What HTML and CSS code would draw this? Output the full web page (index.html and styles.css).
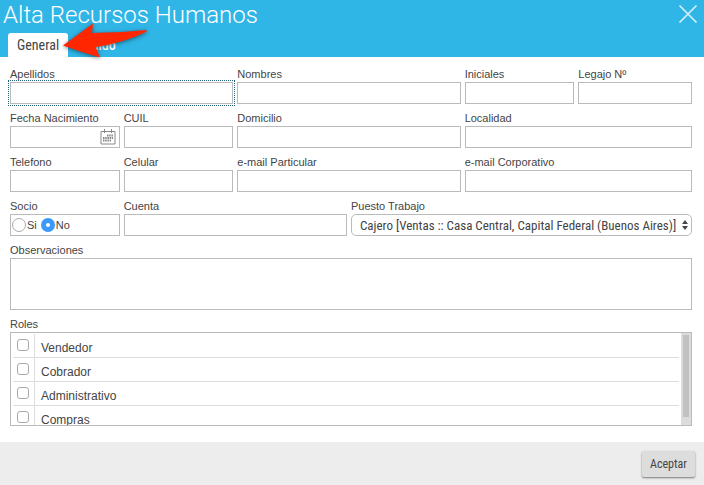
FILE: index.html
```html
<!DOCTYPE html>
<html lang="es">
<head>
    <meta charset="UTF-8">
    <meta name="viewport" content="width=device-width, initial-scale=1.0">
    <title>Alta Recursos Humanos</title>
    <link rel="stylesheet" href="styles.css">
</head>
<body>
    <form class="dialog">
        <header class="dialog-header">
            <div class="title-bar">
                <h1>Alta Recursos Humanos</h1>
                <button type="button" class="close-btn" aria-label="Cerrar">
                    <svg width="20" height="20" viewBox="0 0 20 20">
                        <path d="M1.5 1.5L18.5 18.5M18.5 1.5L1.5 18.5" fill="none" stroke="#d5f0fb" stroke-width="1.7"/>
                    </svg>
                </button>
            </div>
            <nav class="tabs">
                <button type="button" class="tab tab-active">General</button>
                <button type="button" class="tab">Pedido</button>
            </nav>
            <svg class="arrow" width="90" height="42" viewBox="0 0 90 42">
                <path d="M2 25.5L32 3.5L31 13Q58 13 85 10Q86.500 11 85 12Q62 23 34.500 27L39 37.500Q20 32 2 25.5Z" fill="#ff2600"/>
            </svg>
        </header>

        <main class="form-body">
            <div class="field span-2">
                <label for="apellidos">Apellidos</label>
                <input type="text" id="apellidos" class="field-current">
            </div>
            <div class="field span-2">
                <label for="nombres">Nombres</label>
                <input type="text" id="nombres">
            </div>
            <div class="field">
                <label for="iniciales">Iniciales</label>
                <input type="text" id="iniciales">
            </div>
            <div class="field">
                <label for="legajo">Legajo Nº</label>
                <input type="text" id="legajo">
            </div>

            <div class="field">
                <label for="fecha">Fecha Nacimiento</label>
                <div class="date-box">
                    <input type="text" id="fecha">
                    <button type="button" class="calendar-btn" aria-label="Calendario">
                        <svg width="16" height="16" viewBox="0 0 16 16">
                            <path d="M1 2.5H15V15H1Z" fill="none" stroke="#888"/>
                            <path d="M4.5 0V4M11.5 0V4" stroke="#888"/>
                            <path d="M7 6.5H13M3 9H13M3 11.5H11" stroke="#888" stroke-width="2" stroke-dasharray="1.5 0.7"/>
                        </svg>
                    </button>
                </div>
            </div>
            <div class="field">
                <label for="cuil">CUIL</label>
                <input type="text" id="cuil">
            </div>
            <div class="field span-2">
                <label for="domicilio">Domicilio</label>
                <input type="text" id="domicilio">
            </div>
            <div class="field span-2">
                <label for="localidad">Localidad</label>
                <input type="text" id="localidad">
            </div>

            <div class="field">
                <label for="telefono">Telefono</label>
                <input type="text" id="telefono">
            </div>
            <div class="field">
                <label for="celular">Celular</label>
                <input type="text" id="celular">
            </div>
            <div class="field span-2">
                <label for="email-particular">e-mail Particular</label>
                <input type="text" id="email-particular">
            </div>
            <div class="field span-2">
                <label for="email-corporativo">e-mail Corporativo</label>
                <input type="text" id="email-corporativo">
            </div>

            <div class="field">
                <span class="field-label" id="socio-label">Socio</span>
                <div class="radio-box" role="radiogroup" aria-labelledby="socio-label">
                    <input type="radio" name="socio" id="socio-si">
                    <label for="socio-si">Si</label>
                    <input type="radio" name="socio" id="socio-no" checked>
                    <label for="socio-no">No</label>
                </div>
            </div>
            <div class="field span-2">
                <label for="cuenta">Cuenta</label>
                <input type="text" id="cuenta">
            </div>
            <div class="field span-3">
                <label for="puesto">Puesto Trabajo</label>
                <div class="select-box">
                    <select id="puesto">
                        <option>Cajero [Ventas :: Casa Central, Capital Federal (Buenos Aires)]</option>
                    </select>
                    <svg class="select-arrows" width="6" height="10" viewBox="0 0 6 10">
                        <path d="M0 4L3 0L6 4ZM0 6L3 10L6 6Z" fill="#444"/>
                    </svg>
                </div>
            </div>

            <div class="field span-6">
                <label for="observaciones">Observaciones</label>
                <textarea id="observaciones"></textarea>
            </div>

            <div class="field span-6">
                <span class="field-label">Roles</span>
                <div class="roles-box">
                    <div class="roles-list">
                        <table class="roles-table">
                            <tbody>
                                <tr>
                                    <td class="check-col"><input type="checkbox" id="rol-vendedor"></td>
                                    <td><label for="rol-vendedor">Vendedor</label></td>
                                </tr>
                                <tr>
                                    <td class="check-col"><input type="checkbox" id="rol-cobrador"></td>
                                    <td><label for="rol-cobrador">Cobrador</label></td>
                                </tr>
                                <tr>
                                    <td class="check-col"><input type="checkbox" id="rol-administrativo"></td>
                                    <td><label for="rol-administrativo">Administrativo</label></td>
                                </tr>
                                <tr>
                                    <td class="check-col"><input type="checkbox" id="rol-compras"></td>
                                    <td><label for="rol-compras">Compras</label></td>
                                </tr>
                            </tbody>
                        </table>
                    </div>
                    <div class="scroll-track">
                        <div class="scroll-thumb"></div>
                    </div>
                </div>
            </div>
        </main>

        <footer class="dialog-footer">
            <button type="submit" class="accept-btn">Aceptar</button>
        </footer>
    </form>
</body>
</html>
```
FILE: styles.css
```css
* {
    margin: 0;
    padding: 0;
    box-sizing: border-box;
}

body {
    font-family: "Liberation Sans", Arial, sans-serif;
    font-size: 11px;
    color: #444;
    background: white;
}

button, input, textarea, select {
    font: inherit;
    color: inherit;
}

.dialog {
    display: flex;
    flex-direction: column;
    min-height: 100vh;
}

/* Header */
.dialog-header {
    position: relative;
    background: #30b5e7;
}

.title-bar {
    display: flex;
    justify-content: space-between;
    padding: 0 6px 0 3px;
}

.title-bar h1 {
    font-family: Roboto, sans-serif;
    font-size: 24px;
    font-weight: 300;
    line-height: 30px;
    color: white;
}

.close-btn {
    width: 20px;
    height: 20px;
    margin-top: 4px;
    border: none;
    background: none;
    cursor: pointer;
}

.close-btn svg, .calendar-btn svg {
    display: block;
}

.tabs {
    display: flex;
    padding: 3px 8px 0;
}

.tab {
    height: 24px;
    padding: 0 9px;
    border: none;
    border-radius: 3px 3px 0 0;
    background: none;
    font-family: "Roboto Condensed", Roboto, sans-serif;
    font-size: 14px;
    font-weight: 500;
    color: white;
    cursor: pointer;
}

.tab-active {
    background: white;
    color: #444;
    font-weight: 400;
}

.arrow {
    position: absolute;
    left: 61px;
    top: 20px;
    filter: drop-shadow(0 1px 2px rgba(0, 0, 0, 0.5));
}

/* Form */
.form-body {
    display: grid;
    grid-template-columns: repeat(5, 27fr) 28fr;
    gap: 7px 4px;
    padding: 10px 12px 16px 10px;
}

.field {
    display: flex;
    flex-direction: column;
    min-width: 0;
}

.span-2 {
    grid-column: span 2;
}

.span-3 {
    grid-column: span 3;
}

.span-6 {
    grid-column: span 6;
}

.field > label, .field-label {
    line-height: 15px;
}

.field input[type="text"], .field textarea {
    width: 100%;
    height: 22px;
    padding: 0 4px;
    border: 1px solid #bbb;
    background: white;
}

.field textarea {
    height: 52px;
    resize: none;
}

.field input.field-current {
    outline: 1px dotted #1d6078;
    outline-offset: 1px;
}

.field .date-box {
    display: flex;
    align-items: center;
    height: 22px;
    padding-right: 3px;
    border: 1px solid #bbb;
}

.field .date-box input {
    flex: 1;
    min-width: 0;
    height: 20px;
    border: none;
}

.calendar-btn {
    width: 16px;
    height: 16px;
    border: none;
    background: none;
}

.radio-box {
    display: flex;
    align-items: center;
    height: 22px;
    padding-left: 1px;
    border: 1px solid #bbb;
}

.radio-box input {
    appearance: none;
    width: 14px;
    height: 14px;
    border: 1px solid #aaa;
    border-radius: 50%;
    background: white;
}

.radio-box input:checked {
    border: 5px solid #3b99fc;
}

.radio-box label {
    margin: 0 4px 0 1px;
}

.select-box {
    display: grid;
    align-items: center;
}

.select-box select, .select-arrows {
    grid-area: 1 / 1;
}

.select-box select {
    appearance: none;
    width: 100%;
    height: 22px;
    padding: 0 13px 0 8px;
    border: 1px solid #bbb;
    border-radius: 5px;
    background: white;
    font-family: "Roboto Condensed", Roboto, sans-serif;
    font-size: 13px;
}

.select-arrows {
    justify-self: end;
    margin-right: 4px;
    pointer-events: none;
}

/* Roles list */
.roles-box {
    display: flex;
    height: 94px;
    border: 1px solid #bbb;
}

.roles-list {
    flex: 1;
    padding: 1px 2px 0;
    overflow-y: auto;
}

.scroll-track {
    width: 10px;
    padding: 2px;
    background: #dcdcdc;
}

.scroll-thumb {
    height: 82px;
    background: #c1c1c1;
}

.roles-table {
    width: 100%;
    border-spacing: 0;
    font-size: 12px;
}

.roles-table td {
    padding: 6px 6px 1px;
    border-bottom: 1px solid #ddd;
    line-height: 16px;
}

.roles-table .check-col {
    width: 22px;
    padding: 0 4px 2px;
    border-right: 1px solid #ddd;
}

.roles-table label {
    display: block;
}

.roles-table input {
    appearance: none;
    display: block;
    width: 12px;
    height: 12px;
    border: 1px solid #aaa;
    border-radius: 3px;
    background: white;
}

/* Footer */
.dialog-footer {
    display: flex;
    flex: 1;
    justify-content: flex-end;
    align-items: center;
    min-height: 43px;
    padding-right: 9px;
    background: #ededed;
}

.accept-btn {
    height: 26px;
    padding: 0 8px;
    border: none;
    border-radius: 2px;
    background: #ddd;
    box-shadow: 0 1px 2px rgba(0, 0, 0, 0.5);
    font-family: "Roboto Condensed", Roboto, sans-serif;
    font-size: 12px;
    cursor: pointer;
}
```
